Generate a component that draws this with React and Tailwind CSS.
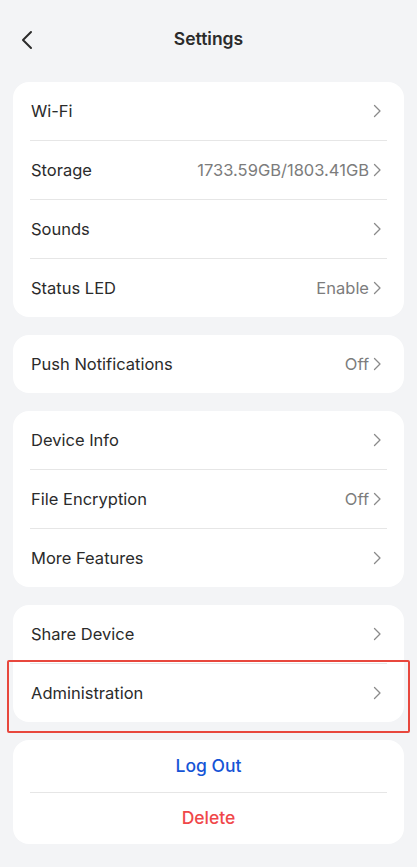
import React from 'react';

const Chevron = () => (
  <svg className="w-[9px] h-[14px] text-[#8a8a8a] shrink-0" viewBox="0 0 9 14" fill="none" stroke="currentColor">
    <path d="M1.5 1.5L7 7l-5.5 5.5" strokeWidth={1.3} strokeLinecap="round" strokeLinejoin="round" />
  </svg>
);

const Row = ({ label, value, last, highlight }) => (
  <div className="relative">
    <div className="flex items-center h-[58px] pl-[18px] pr-[22px]">
      <span className="flex-1 text-[16.5px] text-[#2b2b2b]">{label}</span>
      {value && <span className="text-[16.5px] text-[#7c7c7c] mr-[4px]">{value}</span>}
      <Chevron />
    </div>
    {!last && <div className="mx-[17px] h-px bg-[#e6e6e6]" />}
    {highlight && (
      <div className="absolute left-[-6px] right-[-6px] top-[-4px] bottom-[-11px] border-[2.5px] border-[#e8473d] rounded-[2px] pointer-events-none" />
    )}
  </div>
);

const Card = ({ children }) => (
  <div className="bg-white rounded-[16px]">{children}</div>
);

const sections = [
  [
    { label: 'Wi-Fi' },
    { label: 'Storage', value: '1733.59GB/1803.41GB' },
    { label: 'Sounds' },
    { label: 'Status LED', value: 'Enable' },
  ],
  [{ label: 'Push Notifications', value: 'Off' }],
  [
    { label: 'Device Info' },
    { label: 'File Encryption', value: 'Off' },
    { label: 'More Features' },
  ],
  [{ label: 'Share Device' }, { label: 'Administration', highlight: true }],
];

export default function App() {
  return (
    <div className="min-h-[867px] bg-[#f3f4f6] font-['Inter',sans-serif]">
      {/* Header */}
      <div className="relative flex items-center justify-center h-[82px]">
        <button className="absolute left-[18px] top-[28px] p-[2px]">
          <svg className="w-[14px] h-[20px] text-[#2b2b2b]" viewBox="0 0 14 20" fill="none" stroke="currentColor">
            <path d="M11 2L3 10l8 8" strokeWidth={2} strokeLinecap="round" strokeLinejoin="round" />
          </svg>
        </button>
        <h1 className="text-[17.5px] font-semibold text-[#2b2b2b] -mt-[3px]">Settings</h1>
      </div>

      <div className="px-[13px] flex flex-col gap-[18px]">
        {sections.map((rows, i) => (
          <Card key={i}>
            {rows.map((r, j) => (
              <Row key={r.label} {...r} last={j === rows.length - 1} />
            ))}
          </Card>
        ))}
        <Card>
          <div className="flex items-center justify-center h-[52px] text-[17.5px] font-medium text-[#1554d6]">Log Out</div>
          <div className="mx-[17px] h-px bg-[#e6e6e6]" />
          <div className="flex items-center justify-center h-[51px] text-[17.5px] font-medium text-[#f0474a]">Delete</div>
        </Card>
      </div>
    </div>
  );
}
